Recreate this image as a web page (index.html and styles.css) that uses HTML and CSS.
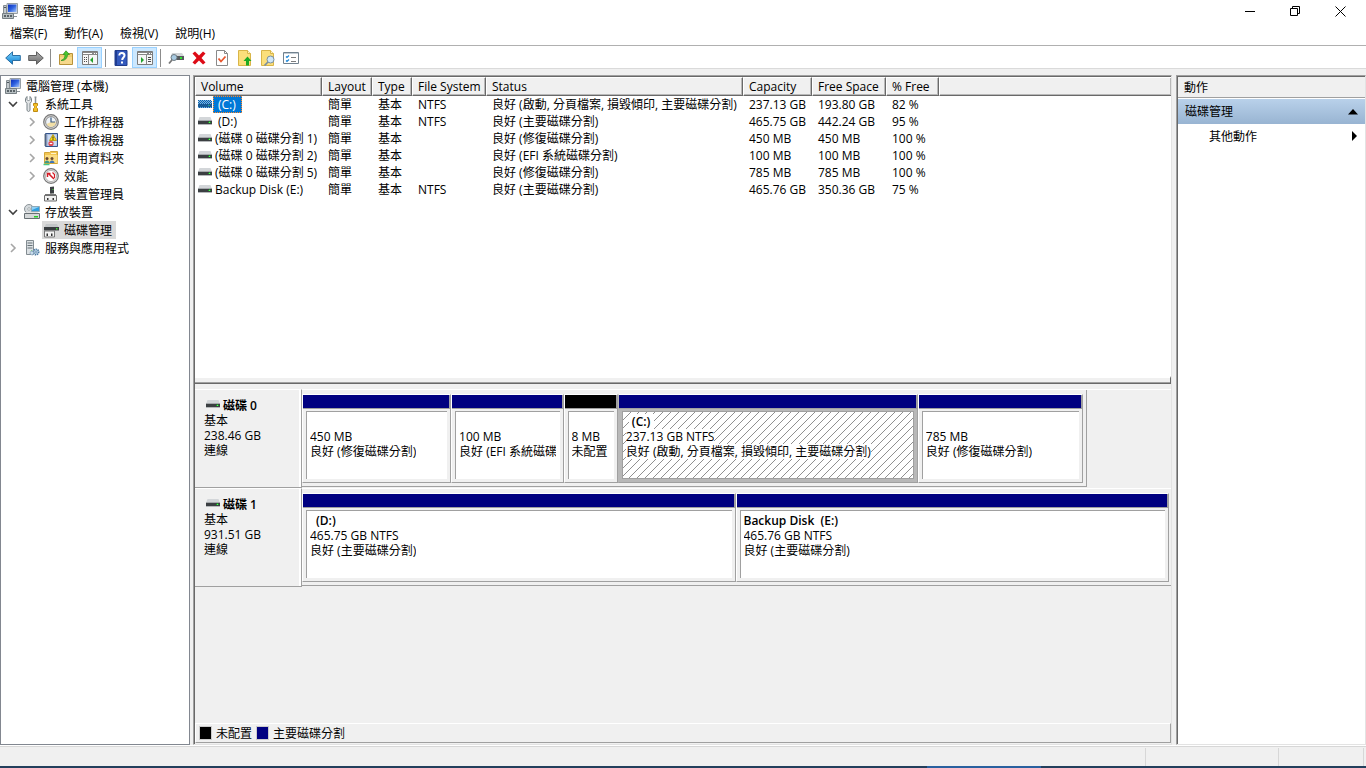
FILE: index.html
```html
<!DOCTYPE html>
<html lang="zh-Hant">
<head>
<meta charset="utf-8">
<title>電腦管理</title>
<link rel="stylesheet" href="styles.css">
</head>
<body>
<svg class="defs" aria-hidden="true">
  <defs>
    <linearGradient id="g-blue" x1="0" y1="0" x2="0" y2="1"><stop offset="0" stop-color="#7fd4ff"/><stop offset="1" stop-color="#0b7fd0"/></linearGradient>
    <linearGradient id="g-gray" x1="0" y1="0" x2="0" y2="1"><stop offset="0" stop-color="#b5b5b5"/><stop offset="1" stop-color="#6a6a6a"/></linearGradient>
    <linearGradient id="g-screen" x1="0" y1="0" x2="1" y2="1"><stop offset="0" stop-color="#0a2bb8"/><stop offset=".5" stop-color="#2f62e0"/><stop offset="1" stop-color="#a9c8fa"/></linearGradient>
    <symbol id="i-computer" viewBox="0 0 16 16">
      <path d="M5 .5h10.500v10H5z" fill="#d9dde0" stroke="#98a0a6"/><path d="M6 1.500h8.500v7.500H6z" fill="url(#g-screen)"/>
      <path d="M1.500 2.500h3v8h-3z" fill="#c3c9cd" stroke="#868e93"/><path d="M2 4h2v1H2z" fill="#4b555c"/>
      <path d="M9 11h3v2H9z" fill="#9aa2a8"/><path d="M.5 10.500h11v5H.5z" fill="#b7bfc2" stroke="#767f84"/>
      <path d="M2 12h2v2H2zM5 12h2v2H5zM8 12h2v2H8z" fill="#596267"/><path d="M12 13h3v1h-3z" fill="#8c9499"/>
    </symbol>
    <symbol id="i-tools" viewBox="0 0 16 16">
      <path d="M3 .5v3l1.500 1.500L6 3.500v-3l1.500 2v3L6 7.500v7l-1.500 1-1.500-1v-7L1.500 5.500v-3z" fill="#e1e4e6" stroke="#7b8489"/>
      <path d="M11.500 1v7" stroke="#8b9296" stroke-width="1.500"/><path d="M10.500 1h2" stroke="#8b9296"/>
      <path d="M9.500 7.500h4v2l-1 1v1l1 1v3h-4v-3l1-1v-1l-1-1z" fill="#f3bf26" stroke="#bf8a10"/>
    </symbol>
    <symbol id="i-clock" viewBox="0 0 16 16">
      <circle cx="8" cy="8" r="7.300" fill="#d8d8d8" stroke="#777" stroke-width="1.200"/><circle cx="8" cy="8" r="5.400" fill="#eef3f8" stroke="#8e8e8e"/>
      <path d="M8 8h5A5 5 0 0 1 3.500 10z" fill="#f2dfa6"/><path d="M8 3.500V8h4" fill="none" stroke="#3a5a80" stroke-width="1.200"/>
    </symbol>
    <symbol id="i-event" viewBox="0 0 16 16">
      <path d="M2.500 1.500h12v13h-12z" fill="#a9bfe4" stroke="#35558c"/><path d="M1 3h3M1 5h3M1 7h3M1 9h3M1 11h3M1 13h3" stroke="#66717c"/>
      <path d="M5 3h8.500v10.500H5z" fill="#c9d8f0"/><path d="M10 2.500l3.500 6h-7z" fill="#ffe01b" stroke="#b29200" stroke-width=".8"/><path d="M10 4.500v2.200M10 7.200v.8" stroke="#222"/>
      <circle cx="8" cy="11.500" r="2.600" fill="#e0454d"/><path d="M6.700 11.500h2.600" stroke="#fff" stroke-width="1.200"/>
    </symbol>
    <symbol id="i-share" viewBox="0 0 16 16">
      <path d="M1.500 2.500h5l1-1h7v12h-13z" fill="#f3c653" stroke="#d3a63a"/><path d="M2 5h12.500v8H2z" fill="#fbdc83"/><path d="M8 3h5v1H8z" fill="#fff3cc"/>
      <circle cx="4" cy="8.500" r="1.500" fill="#6b4a32"/><circle cx="9" cy="8.500" r="1.500" fill="#6b4a32"/><path d="M1.500 13c0-3.500 5-3.500 5 0z" fill="#3f9a8a"/><path d="M6.500 13c0-3.500 5-3.500 5 0z" fill="#3f76b7"/>
      <path d="M.5 14.500h6" stroke="#46c988" stroke-width="1.500"/>
    </symbol>
    <symbol id="i-perf" viewBox="0 0 16 16">
      <circle cx="8" cy="8" r="7.300" fill="#e5e5e5" stroke="#777" stroke-width="1.200"/><circle cx="8" cy="8" r="5.600" fill="#fff" stroke="#aaa" stroke-width=".8"/>
      <path d="M4.500 9V5.500h3M5 5l6 6" fill="none" stroke="#d31c26" stroke-width="1.500"/><path d="M9.500 4.500l2 2V10" fill="none" stroke="#d31c26" stroke-width="1.200"/>
    </symbol>
    <symbol id="i-device" viewBox="0 0 16 16">
      <path d="M7 1l4-.5v7H7z" fill="#3b4043"/><path d="M9.500 3h1v1h-1z" fill="#48e23a"/><path d="M7 7h2v2H7z" fill="#888"/>
      <path d="M1.500 9.500h12v5.500h-12z" fill="#f1f1f1" stroke="#6d6d6d"/><path d="M2 8h11v1.500H2z" fill="#777"/><path d="M4 12h1.500v2H4zM9.500 12H11v2H9.500z" fill="#333"/>
    </symbol>
    <symbol id="i-storage" viewBox="0 0 16 16">
      <circle cx="5" cy="5" r="4.500" fill="#d5dadd" stroke="#8a9397"/><circle cx="5" cy="5" r="1.300" fill="#fff" stroke="#8a9397" stroke-width=".7"/>
      <path d="M7.500 2.500h8v5h-8z" fill="#2f9fe0" stroke="#8fa9b8"/><path d="M8 3h7L8 6z" fill="#8fd0f5"/>
      <path d="M1 10l1.500-2h11l2 2z" fill="#e3e3e3"/><path d="M.5 9.500h15v5H.5z" fill="#d5d8d9" stroke="#687074"/><path d="M10 12h4v1.500h-4z" fill="#25cf25"/>
    </symbol>
    <symbol id="i-diskmgmt" viewBox="0 0 16 16">
      <path d="M3 2h11l1.500 3h-14z" fill="#c3c6c8"/><path d="M1 5h15v3.500H1z" fill="#393d40"/><path d="M13 6h1.500v1.500H13z" fill="#40e037"/>
      <path d="M1.500 9h10v6h-10z" fill="#f4f4f4" stroke="#777"/><path d="M3.500 11.500H5V14H3.500zM8 11.500h1.500V14H8z" fill="#333"/>
    </symbol>
    <symbol id="i-services" viewBox="0 0 16 16">
      <path d="M2.500.5h7v14h-7z" fill="#dce1e4" stroke="#838c91"/><path d="M3.500 3h5M3.500 5.500h5M3.500 8h5" stroke="#677177"/><path d="M7 10.500h1v1H7z" fill="#2fc32f"/>
      <circle cx="12" cy="12" r="2.700" fill="#c7dced" stroke="#4c7ba3" stroke-width="1.600" stroke-dasharray="1.300 .7"/><circle cx="12" cy="12" r="1" fill="#fff" stroke="#4c7ba3" stroke-width=".7"/>
      <circle cx="8" cy="13" r="1.900" fill="#c7dced" stroke="#6e8ea8" stroke-width="1" stroke-dasharray="1 .6"/>
    </symbol>
    <symbol id="i-drive" viewBox="0 0 14 9"><path d="M1.500 0h11L14 4H0z" fill="#d3d6d9"/><path d="M0 3h14v4H0z" fill="#3b3f42"/><path d="M0 3h14v1H0z" fill="#a5a9ac"/><path d="M0 7h14v1H0z" fill="#b5b8ba"/><path d="M11 5h1v1h-1z" fill="#5f5"/><path d="M10 5h1v1h-1zM12 5h1v1h-1zM11 4h1v1h-1z" fill="#1c9a2a"/></symbol>
    <symbol id="i-drive-sel" viewBox="0 0 14 9"><path d="M1 0h12l1 3v5H0V3z" fill="#7fb4dc"/><path d="M0 4h14v3H0z" fill="#27527a"/><path d="M0 .5h14M0 2.500h14M0 4.500h14M0 6.500h14" stroke="#0a62b0" stroke-dasharray="1 1"/><path d="M0 1.500h14M0 3.500h14M0 5.500h14M0 7.500h14" stroke="#0a62b0" stroke-dasharray="1 1" stroke-dashoffset="1"/><path d="M10 5h2v1h-2z" fill="#1f9c85"/></symbol>
    <symbol id="i-back" viewBox="0 0 16 16"><path d="M.7 8L7.500 1.800v3.700h7.800v5H7.500v3.700z" fill="url(#g-blue)" stroke="#2b6ea3" stroke-linejoin="round"/></symbol>
    <symbol id="i-forward" viewBox="0 0 16 16"><path d="M15.300 8L8.500 1.800v3.700H.7v5h7.800v3.700z" fill="url(#g-gray)" stroke="#5e5e5e" stroke-linejoin="round"/></symbol>
    <symbol id="i-up" viewBox="0 0 16 16"><path d="M1.500 4.500h4l1-1h8v11h-13z" fill="#f0cd71" stroke="#b8923a"/><path d="M2 7h12v7H2z" fill="#f6d88c"/><path d="M3 10.500C6 9.500 7 7.500 7 4.500H5L8 .8 11.500 4.500h-2C9.500 8 7 11 3 10.500z" fill="#49c62f" stroke="#2d8e1c" stroke-width=".7"/></symbol>
    <symbol id="i-tree" viewBox="0 0 16 16"><path d="M.5 1.500h15v13H.5z" fill="#f6f6f6" stroke="#7b7b7b"/><path d="M1 2h14v3H1z" fill="#888"/><path d="M1 3h9v1H1zM12 3h1v1h-1zM14 3h1v1h-1z" fill="#fff"/><path d="M6.500 5v9" stroke="#888"/><path d="M2 7.500h1M4 7.500h1M2 9.500h1M4 9.500h1M2 11.500h1M4 11.500h1" stroke="#4a4a4a"/><path d="M11 7v6l-3-3z" fill="#22a12c"/></symbol>
    <symbol id="i-pane" viewBox="0 0 16 16"><path d="M.5 1.500h15v13H.5z" fill="#f6f6f6" stroke="#7b7b7b"/><path d="M1 2h14v3H1z" fill="#888"/><path d="M1 3h9v1H1zM12 3h1v1h-1zM14 3h1v1h-1z" fill="#fff"/><path d="M9.500 5v9" stroke="#888"/><path d="M11 7.500h3M11 9.500h3M11 11.500h3" stroke="#4a4a4a"/><path d="M4 7v6l3-3z" fill="#22a12c"/></symbol>
    <symbol id="i-help" viewBox="0 0 16 16"><path d="M2 .5h12v15H2z" fill="#3359bd" stroke="#203c8c"/><path d="M2 1h2v14H2z" fill="#1e3c91"/><path d="M6.300 5.500c0-3.500 5.200-3.200 5.200 0 0 2-2.300 2-2.300 4.500" fill="none" stroke="#fff" stroke-width="2"/><path d="M8 11.500h2v2H8z" fill="#fff"/></symbol>
    <symbol id="i-rescan" viewBox="0 0 16 16"><path d="M4 3h10l2 3H3z" fill="#d2d5d7"/><path d="M3 6h13v4H3z" fill="#55595c"/><path d="M12 7h2v2h-2z" fill="#31e333"/><circle cx="6" cy="7.500" r="3" fill="#a9cbe2" stroke="#6f7b83"/><path d="M4 10l-3 3.500" stroke="#777" stroke-width="1.800"/></symbol>
    <symbol id="i-delete" viewBox="0 0 16 16"><path d="M1.500 3.500L4 1.500l4 4 4-4 2.500 2-4 4.500 4 4.500-2.500 2-4-4-4 4-2.500-2 4-4.500z" fill="#dd0b16"/></symbol>
    <symbol id="i-check" viewBox="0 0 16 16"><path d="M2.500.5h8l3 3v12h-11z" fill="#fff" stroke="#8a8a8a"/><path d="M10.500.5v3h3" fill="none" stroke="#8a8a8a"/><path d="M4.500 8.500l2.500 3 4.500-5" fill="none" stroke="#e8552c" stroke-width="1.800"/></symbol>
    <symbol id="i-note-up" viewBox="0 0 16 16"><path d="M1.500.5h9l3 3v12h-12z" fill="#fbdf7b" stroke="#d9b548"/><path d="M10.500.5v3h3" fill="#fff3c2" stroke="#d9b548"/><path d="M9 15.500V11H6.500L10.500 6.500l4 4.500H12v4.500z" fill="#1eaa22"/></symbol>
    <symbol id="i-note-find" viewBox="0 0 16 16"><path d="M1.500.5h9l3 3v12h-12z" fill="#fbdf7b" stroke="#d9b548"/><path d="M10.500.5v3h3" fill="#fff3c2" stroke="#d9b548"/><circle cx="10.500" cy="9.500" r="3.500" fill="#cfe7f8" stroke="#7c8f9d"/><path d="M8 12l-3.500 3.500" stroke="#7c8f9d" stroke-width="1.700"/></symbol>
    <symbol id="i-list" viewBox="0 0 16 16"><path d="M.5 2.500h15v11H.5z" fill="#fff" stroke="#72828f"/><path d="M1 3h14v1H1z" fill="#c2ccd4"/><path d="M3 6.500l1 1 2-2M3 10.500l1 1 2-2" fill="none" stroke="#2088d8" stroke-width="1.200"/><path d="M8 7.500h5M8 11.500h5" stroke="#7d7d7d"/></symbol>
    <symbol id="i-open" viewBox="0 0 10 10"><path d="M1 3l4 4 4-4" fill="none" stroke="#404040" stroke-width="1.600"/></symbol>
    <symbol id="i-closed" viewBox="0 0 10 10"><path d="M3 1l4 4-4 4" fill="none" stroke="#a6a6a6" stroke-width="1.600"/></symbol>
  </defs>
</svg>

<header class="titlebar">
  <svg class="icon"><use href="#i-computer"/></svg>
  <h1 class="title">電腦管理</h1>
  <div class="window-buttons">
    <button class="window-button" aria-label="最小化"><svg viewBox="0 0 11 11"><path d="M0 5.500h10" stroke="#000"/></svg></button>
    <button class="window-button" aria-label="還原"><svg viewBox="0 0 11 11"><path d="M.5 2.500h7v7h-7zM2.500 2.500v-2h7v7h-2" fill="none" stroke="#000"/></svg></button>
    <button class="window-button" aria-label="關閉"><svg viewBox="0 0 11 11"><path d="M.5.5l10 10M10.500.5l-10 10" stroke="#000"/></svg></button>
  </div>
</header>
<nav class="menubar">
  <button>檔案(F)</button><button>動作(A)</button><button>檢視(V)</button><button>說明(H)</button>
</nav>
<div class="toolbar" role="toolbar">
  <button aria-label="上一頁"><svg class="icon"><use href="#i-back"/></svg></button>
  <button aria-label="下一頁"><svg class="icon"><use href="#i-forward"/></svg></button>
  <span class="divider"></span>
  <button aria-label="上一層"><svg class="icon"><use href="#i-up"/></svg></button>
  <button class="active" aria-label="主控台樹狀目錄"><svg class="icon"><use href="#i-tree"/></svg></button>
  <span class="divider"></span>
  <button aria-label="說明"><svg class="icon"><use href="#i-help"/></svg></button>
  <button class="active" aria-label="執行窗格"><svg class="icon"><use href="#i-pane"/></svg></button>
  <span class="divider"></span>
  <button aria-label="重新掃描"><svg class="icon"><use href="#i-rescan"/></svg></button>
  <button aria-label="刪除"><svg class="icon"><use href="#i-delete"/></svg></button>
  <button aria-label="內容"><svg class="icon"><use href="#i-check"/></svg></button>
  <button aria-label="開啟"><svg class="icon"><use href="#i-note-up"/></svg></button>
  <button aria-label="瀏覽"><svg class="icon"><use href="#i-note-find"/></svg></button>
  <button aria-label="設定"><svg class="icon"><use href="#i-list"/></svg></button>
</div>

<main class="workspace">
  <nav class="tree">
    <div class="node root"><svg class="icon"><use href="#i-computer"/></svg><span class="name">電腦管理 (本機)</span></div>
    <div class="node"><button class="toggle" aria-label="收合"><svg><use href="#i-open"/></svg></button><svg class="icon"><use href="#i-tools"/></svg><span class="name">系統工具</span></div>
    <div class="node child"><button class="toggle" aria-label="展開"><svg><use href="#i-closed"/></svg></button><svg class="icon"><use href="#i-clock"/></svg><span class="name">工作排程器</span></div>
    <div class="node child"><button class="toggle" aria-label="展開"><svg><use href="#i-closed"/></svg></button><svg class="icon"><use href="#i-event"/></svg><span class="name">事件檢視器</span></div>
    <div class="node child"><button class="toggle" aria-label="展開"><svg><use href="#i-closed"/></svg></button><svg class="icon"><use href="#i-share"/></svg><span class="name">共用資料夾</span></div>
    <div class="node child"><button class="toggle" aria-label="展開"><svg><use href="#i-closed"/></svg></button><svg class="icon"><use href="#i-perf"/></svg><span class="name">效能</span></div>
    <div class="node child"><span class="toggle"></span><svg class="icon"><use href="#i-device"/></svg><span class="name">裝置管理員</span></div>
    <div class="node"><button class="toggle" aria-label="收合"><svg><use href="#i-open"/></svg></button><svg class="icon"><use href="#i-storage"/></svg><span class="name">存放裝置</span></div>
    <div class="node child"><span class="toggle"></span><div class="selected"><svg class="icon"><use href="#i-diskmgmt"/></svg><span class="name">磁碟管理</span></div></div>
    <div class="node"><button class="toggle" aria-label="展開"><svg><use href="#i-closed"/></svg></button><svg class="icon"><use href="#i-services"/></svg><span class="name">服務與應用程式</span></div>
  </nav>

  <section class="center">
    <div class="volumes">
      <table class="volume-table">
        <colgroup><col class="c-volume"><col class="c-layout"><col class="c-type"><col class="c-fs"><col class="c-status"><col class="c-capacity"><col class="c-space"><col class="c-free"><col></colgroup>
        <thead><tr><th>Volume</th><th>Layout</th><th>Type</th><th>File System</th><th>Status</th><th>Capacity</th><th>Free Space</th><th>% Free</th><th></th></tr></thead>
        <tbody>
          <tr><td><div class="volume"><svg class="drive"><use href="#i-drive-sel"/></svg><span class="letter current">(C:)</span></div></td><td>簡單</td><td>基本</td><td>NTFS</td><td>良好 (啟動, 分頁檔案, 損毀傾印, 主要磁碟分割)</td><td>237.13 GB</td><td>193.80 GB</td><td>82 %</td><td></td></tr>
          <tr><td><div class="volume"><svg class="drive"><use href="#i-drive"/></svg><span class="letter">(D:)</span></div></td><td>簡單</td><td>基本</td><td>NTFS</td><td>良好 (主要磁碟分割)</td><td>465.75 GB</td><td>442.24 GB</td><td>95 %</td><td></td></tr>
          <tr><td><div class="volume"><svg class="drive"><use href="#i-drive"/></svg><span>(磁碟 0 磁碟分割 1)</span></div></td><td>簡單</td><td>基本</td><td></td><td>良好 (修復磁碟分割)</td><td>450 MB</td><td>450 MB</td><td>100 %</td><td></td></tr>
          <tr><td><div class="volume"><svg class="drive"><use href="#i-drive"/></svg><span>(磁碟 0 磁碟分割 2)</span></div></td><td>簡單</td><td>基本</td><td></td><td>良好 (EFI 系統磁碟分割)</td><td>100 MB</td><td>100 MB</td><td>100 %</td><td></td></tr>
          <tr><td><div class="volume"><svg class="drive"><use href="#i-drive"/></svg><span>(磁碟 0 磁碟分割 5)</span></div></td><td>簡單</td><td>基本</td><td></td><td>良好 (修復磁碟分割)</td><td>785 MB</td><td>785 MB</td><td>100 %</td><td></td></tr>
          <tr><td><div class="volume"><svg class="drive"><use href="#i-drive"/></svg><span>Backup Disk (E:)</span></div></td><td>簡單</td><td>基本</td><td>NTFS</td><td>良好 (主要磁碟分割)</td><td>465.76 GB</td><td>350.36 GB</td><td>75 %</td><td></td></tr>
        </tbody>
      </table>
    </div>
    <div class="splitter"></div>
    <div class="disks">
      <div class="disk">
        <div class="disk-label"><div class="disk-name"><svg class="drive"><use href="#i-drive"/></svg>磁碟 0</div><div>基本</div><div>238.46 GB</div><div>連線</div></div>
        <div class="track">
          <div class="partitions system-disk">
            <div class="partition" style="flex-grow:149"><div class="bar"></div><div class="body"><b></b><span>450 MB</span><span>良好 (修復磁碟分割)</span></div></div>
            <div class="partition" style="flex-grow:112"><div class="bar"></div><div class="body"><b></b><span>100 MB</span><span>良好 (EFI 系統磁碟分割)</span></div></div>
            <div class="partition" style="flex-grow:53"><div class="bar unallocated"></div><div class="body"><b></b><span>8 MB</span><span>未配置</span></div></div>
            <div class="partition chosen" style="flex-grow:302"><div class="bar"></div><div class="body"><b class="indent">(C:)</b><span>237.13 GB NTFS</span><span>良好 (啟動, 分頁檔案, 損毀傾印, 主要磁碟分割)</span></div></div>
            <div class="partition" style="flex-grow:165"><div class="bar"></div><div class="body"><b></b><span>785 MB</span><span>良好 (修復磁碟分割)</span></div></div>
          </div>
        </div>
      </div>
      <div class="disk">
        <div class="disk-label"><div class="disk-name"><svg class="drive"><use href="#i-drive"/></svg>磁碟 1</div><div>基本</div><div>931.51 GB</div><div>連線</div></div>
        <div class="track">
          <div class="partitions">
            <div class="partition" style="flex-grow:433"><div class="bar"></div><div class="body"><b class="indent">(D:)</b><span>465.75 GB NTFS</span><span>良好 (主要磁碟分割)</span></div></div>
            <div class="partition" style="flex-grow:433"><div class="bar"></div><div class="body"><b>Backup Disk&nbsp; (E:)</b><span>465.76 GB NTFS</span><span>良好 (主要磁碟分割)</span></div></div>
          </div>
        </div>
      </div>
    </div>
    <div class="legend"><span class="swatch unallocated"></span><span>未配置</span><span class="swatch"></span><span>主要磁碟分割</span></div>
  </section>

  <aside class="actions">
    <h2 class="actions-title">動作</h2>
    <button class="actions-group">磁碟管理<svg class="arrow" viewBox="0 0 10 6"><path d="M5 0l5 5.500H0z"/></svg></button>
    <button class="actions-item">其他動作<svg class="arrow" viewBox="0 0 10 10"><path d="M3 0l5 5-5 5z"/></svg></button>
  </aside>
</main>
<footer class="statusbar"><span class="cell wide"></span><span class="cell"></span><span class="cell end"></span></footer>
<div class="taskbar-edge"><span class="taskbar-item"></span></div>
</body>
</html>
```
FILE: styles.css
```css
* { box-sizing: border-box; }
body { margin: 0; height: 100vh; display: flex; flex-direction: column; overflow: hidden; background: #fff; color: #000; font: 12px/15px "Open Sans", "Noto Sans CJK TC", sans-serif; }
button { border: 0; padding: 0; margin: 0; background: none; font: inherit; color: inherit; }
h1, h2 { margin: 0; font: inherit; }
.defs { position: absolute; width: 0; height: 0; }
.icon { width: 16px; height: 16px; flex: none; display: block; }

.titlebar { height: 22px; flex: none; display: flex; align-items: center; padding-left: 2px; }
.title { flex: 1; margin-left: 5px; }
.window-buttons { display: flex; margin-right: 3px; }
.window-button { width: 45px; height: 21px; display: flex; align-items: center; justify-content: center; }
.window-button svg { width: 11px; height: 11px; }
.menubar { height: 24px; flex: none; display: flex; gap: 17px; padding-left: 10px; align-items: center; border-bottom: 1px solid #b0b0b0; }
.toolbar { height: 23px; flex: none; display: flex; align-items: flex-end; padding-left: 1px; border-bottom: 1px solid #dadada; }
.toolbar button { width: 23px; height: 21px; display: flex; align-items: center; justify-content: center; }
.toolbar .active { width: 25px; background: #cce8ff; border: 1px solid #99d1ff; }
.divider { width: 1px; height: 18px; margin: 0 3px 1px; background: #8c8c8c; }

.workspace { flex: 1; min-height: 0; display: flex; padding-top: 6px; background: #f0f0f0; border-bottom: 1px solid #fff; }
.tree { width: 190px; flex: none; padding-top: 1px; background: #fff; border: 1px solid #828790; }
.node { height: 18px; display: flex; align-items: center; padding-left: 4px; }
.child { padding-left: 23px; }
.name { margin-left: 5px; white-space: nowrap; }
.toggle { width: 19px; height: 18px; flex: none; display: flex; align-items: center; padding-left: 3px; }
.toggle svg { width: 10px; height: 10px; }
.selected { display: flex; align-items: center; height: 18px; background: #d9d9d9; margin-left: -1px; padding: 0 4px 0 1px; }

.center { flex: 1; min-width: 0; display: flex; flex-direction: column; margin: 0 4px 0 3px; border: 1px solid #a0a0a0; border-right-color: #e3e3e3; border-bottom-color: #e3e3e3; box-shadow: inset 1px 1px #696969; padding: 1px 0 1px 1px; }
.volumes { flex: 1; min-height: 0; overflow: hidden; background: #fff; }
.volume-table { width: 100%; border-collapse: separate; border-spacing: 0; table-layout: fixed; }
.volume-table th { height: 19px; padding: 0 0 0 5px; text-align: left; font-weight: 400; white-space: nowrap; background: #f0f0f0; border-top: 1px solid #fff; border-left: 1px solid #fff; border-right: 1px solid #696969; border-bottom: 1px solid #696969; box-shadow: inset -1px -1px #b8b8b8; }
.volume-table th:last-child { border-right: 0; }
.volume-table td { height: 17px; padding: 0 0 0 6px; white-space: nowrap; line-height: 17px; }
.volume-table td:first-child { padding-left: 3px; }
.c-volume { width: 127px; }
.c-layout { width: 50px; }
.c-type { width: 40px; }
.c-fs { width: 74px; }
.c-status { width: 257px; }
.c-capacity { width: 69px; }
.c-space { width: 74px; }
.c-free { width: 53px; }
.volume { height: 17px; display: flex; align-items: center; gap: 3px; }
.drive { width: 14px; height: 9px; flex: none; }
.letter { height: 17px; padding: 0 6px 0 5px; margin-left: -2px; }
.current { color: #fff; background: #0078d7; outline: 1px dotted #ff8728; outline-offset: -1px; }
.splitter { height: 8px; flex: none; background: #f0f0f0; border-top: 2px solid #fff; border-bottom: 1px solid #696969; border-right: 1px solid #696969; box-shadow: inset 0 -1px #a0a0a0; }
.disks { height: 339px; flex: none; padding-top: 5px; }
.disk { height: 99px; display: flex; }
.disk-label { width: 107px; flex: none; padding: 8px 0 0 9px; border-top: 1px solid #fff; border-right: 1px solid #a0a0a0; border-bottom: 1px solid #a0a0a0; box-shadow: inset -2px 0 #fff; }
.disk-name { display: flex; align-items: center; gap: 3px; padding-left: 2px; font-weight: 600; }
.disk-name .drive { margin-bottom: 3px; }
.track { flex: 1; min-width: 0; border-top: 1px solid #fff; display: flex; }
.partitions { flex: 1; min-width: 0; display: flex; padding: 4px 2px 3px 0; height: 97px; border-bottom: 1px solid #a0a0a0; }
.system-disk { flex: none; width: 90.3%; padding-right: 3px; border-right: 1px solid #a0a0a0; }
.partition { flex: 1 1 0; min-width: 0; display: flex; flex-direction: column; border: 1px solid #a0a0a0; border-left-color: #fff; border-top-color: #fff; }
.bar { height: 14px; flex: none; background: #000080; border-right: 1px solid #a0a0a0; border-bottom: 1px solid #a0a0a0; }
.body { flex: 1; margin: 2px 3px 3px; padding: 2px 4px 0 3px; display: flex; flex-direction: column; align-items: flex-start; overflow: hidden; background: #fff; border-top: 1px solid #a0a0a0; border-left: 1px solid #a0a0a0; white-space: nowrap; }
.body b { height: 15px; font-weight: 600; }
.body span { max-width: 100%; overflow: hidden; }
.body .indent { margin-left: 3px; padding: 0 4px 0 3px; }
.chosen { background: #b8b8b8; border-left-color: #b8b8b8; }
.chosen .body { border: 1px solid #a0a0a0; background: #fff linear-gradient(135deg, transparent 46%, #909090 46%, #909090 54%, transparent 54%) 0 0 / 8px 8px; }
.chosen .body b, .chosen .body span { background: #fff; }
.legend { height: 20px; flex: none; display: flex; align-items: center; gap: 5px; padding-left: 4px; border: 1px solid #a0a0a0; border-top-color: #fff; border-left-color: #fff; }
.swatch { width: 11px; height: 12px; background: #000080; outline: 1px solid #ccc; }
.bar.unallocated, .swatch.unallocated { background: #000; }

.actions { width: 190px; flex: none; display: flex; flex-direction: column; background: #fff; border: 1px solid #a0a0a0; border-right-color: #e3e3e3; border-bottom-color: #e3e3e3; box-shadow: inset 1px 1px #696969; padding: 1px 0 0 1px; }
.actions-title { height: 21px; padding: 3px 6px; background: #f0f0f0; border-bottom: 1px solid #a0a0a0; }
.actions-group { height: 25px; margin-top: 1px; padding: 0 7px; display: flex; align-items: center; justify-content: space-between; background: linear-gradient(#b9d1ea, #98b4d2); }
.actions-item { height: 24px; padding: 0 6px 0 31px; display: flex; align-items: center; justify-content: space-between; }
.arrow { width: 10px; height: 10px; }
.statusbar { height: 20px; flex: none; display: flex; background: #f0f0f0; border-top: 1px solid #d7d7d7; padding-right: 2px; }
.cell { width: 133px; margin-top: 1px; border-right: 1px solid #d7d7d7; }
.wide { flex: 1; }
.end { width: 85px; }
.taskbar-edge { height: 2px; flex: none; display: flex; justify-content: flex-end; padding-right: 325px; background: #233f5c; }
.taskbar-item { width: 114px; background: #2a609f; }
```
